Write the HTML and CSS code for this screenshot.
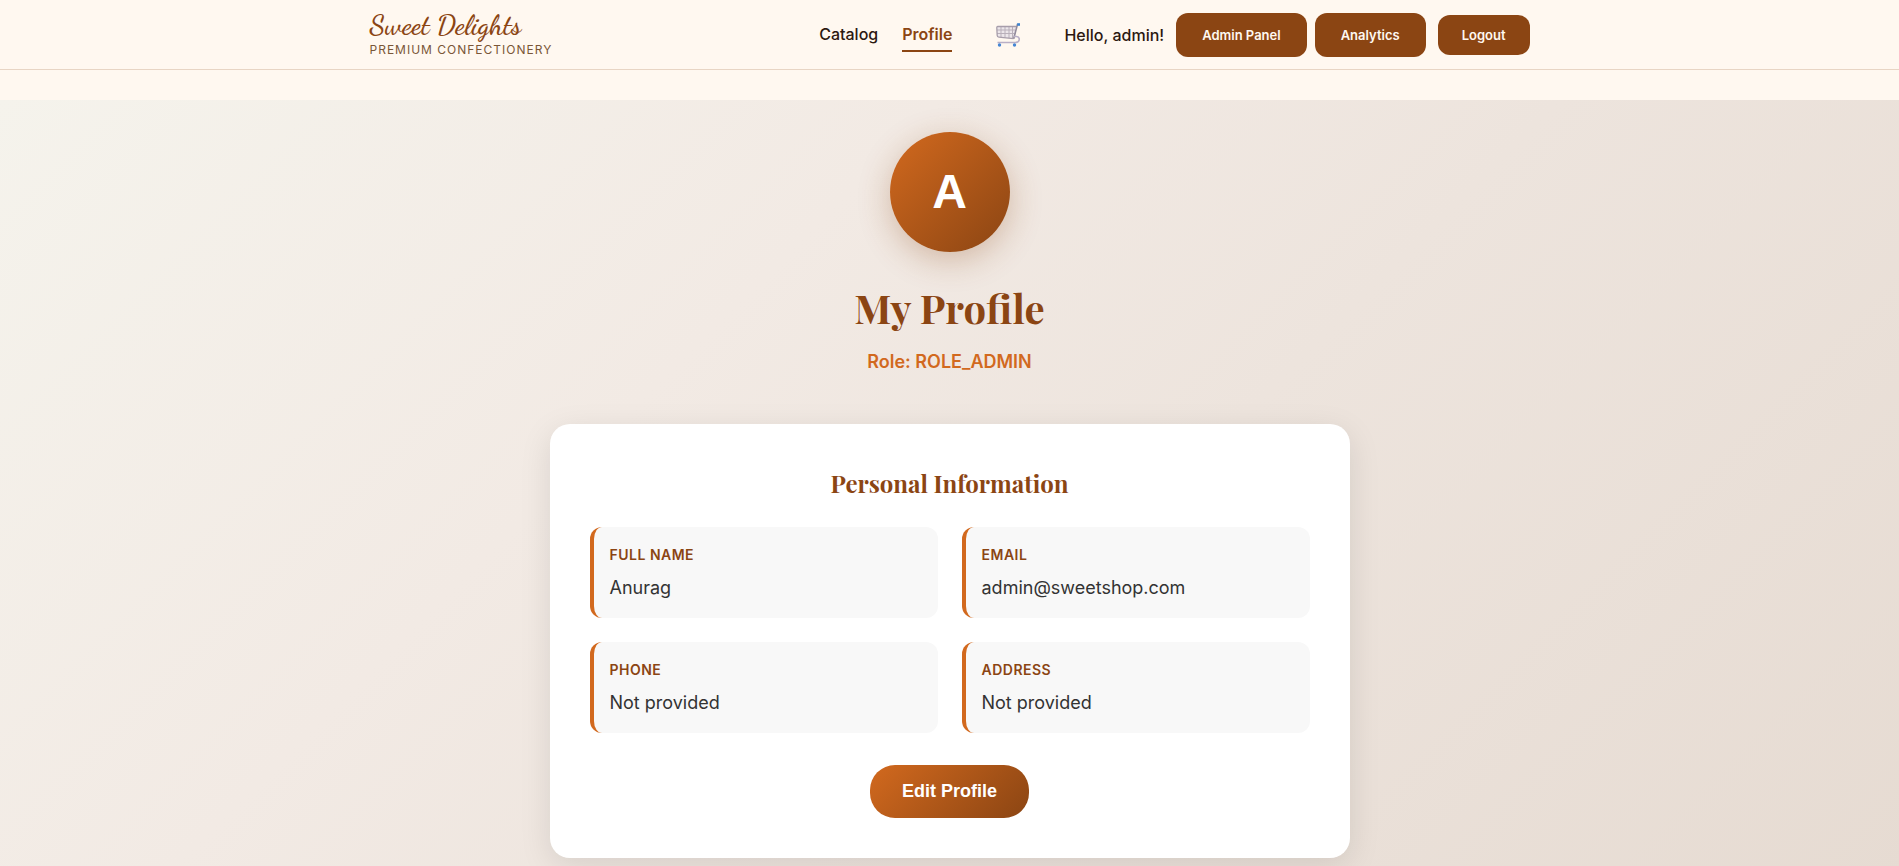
FILE: index.html
```html
<!DOCTYPE html>
<html lang="en">
<head>
<meta charset="utf-8">
<meta name="viewport" content="width=device-width, initial-scale=1">
<title>Sweet Delights - My Profile</title>
<link rel="stylesheet" href="styles.css">
</head>
<body>
<header class="site-header">
  <div class="header-inner">
    <a class="brand" href="#">
      <span class="brand-name">Sweet Delights</span>
      <span class="brand-tagline">PREMIUM CONFECTIONERY</span>
    </a>
    <nav class="nav">
      <a class="nav-link" href="#">Catalog</a>
      <a class="nav-link nav-link-active" href="#" aria-current="page">Profile</a>
      <button class="cart" type="button" aria-label="Cart">
        <svg class="cart-icon" viewBox="0 0 24 24" fill="none" aria-hidden="true">
          <path d="M1 3.5H20L17.5 15.5L2.5 14Q1 14 1 12Z" fill="#ece6ea"/>
          <path d="M1 7H19M1 10.5H18.5M5 3.5V14M9 3.5V14.5M13 3.5V15M16.5 3.5V15" stroke="#b9b0ba" stroke-width="1"/>
          <path d="M20 3.5H1.8Q.7 3.5.8 5L1.2 12.5Q1.3 14 2.8 14.1L17.5 15.6" stroke="#a79daa" stroke-width="1.3"/>
          <path d="M22 1.5H21.4L17.7 15.8" stroke="#91899a" stroke-width="1.6"/>
          <path d="M18 13.5H20.5Q23.4 13.8 23.3 16.3Q23 19.3 19.5 19.5H1.5" stroke="#b9afc6" stroke-width="1.6"/>
          <path d="M21.2 1.5H24" stroke="#3b82d0" stroke-width="2.6"/>
          <circle cx="3.5" cy="22" r="1.7" fill="#4686d4"/>
          <circle cx="18.5" cy="22" r="1.7" fill="#4686d4"/>
        </svg>
      </button>
      <div class="account">
        <span class="greeting">Hello, admin!</span>
        <div class="admin-links">
          <a class="btn btn-large" href="#">Admin Panel</a>
          <a class="btn btn-large" href="#">Analytics</a>
        </div>
        <button class="btn" type="button">Logout</button>
      </div>
    </nav>
  </div>
</header>
<main class="profile">
  <div class="profile-head">
    <div class="avatar">A</div>
    <h1 class="profile-title">My Profile</h1>
    <p class="role">Role: ROLE_ADMIN</p>
  </div>
  <section class="card">
    <h2 class="card-title">Personal Information</h2>
    <dl class="info-grid">
      <div class="info-item"><dt class="info-label">FULL NAME</dt><dd class="info-value">Anurag</dd></div>
      <div class="info-item"><dt class="info-label">EMAIL</dt><dd class="info-value">admin@sweetshop.com</dd></div>
      <div class="info-item"><dt class="info-label">PHONE</dt><dd class="info-value">Not provided</dd></div>
      <div class="info-item"><dt class="info-label">ADDRESS</dt><dd class="info-value">Not provided</dd></div>
    </dl>
    <button class="edit-btn" type="button">Edit Profile</button>
  </section>
</main>
</body>
</html>
```
FILE: styles.css
```css
* {
  box-sizing: border-box;
  margin: 0;
  padding: 0;
}

body {
  background: #fff8f0;
  color: #2c1810;
  font-family: Inter, "Liberation Sans", sans-serif;
  font-size: 16px;
  line-height: 24px;
}

a {
  color: inherit;
  text-decoration: none;
}

.site-header {
  border-bottom: 1px solid #e8d5c4;
  margin-bottom: 30px;
}

.header-inner {
  display: flex;
  align-items: center;
  justify-content: space-between;
  max-width: 1200px;
  min-height: 69px;
  margin: 0 auto;
  padding: 0 20px;
}

.brand {
  display: flex;
  flex-direction: column;
}

.brand-name {
  color: #8b4513;
  font-family: "Dancing Script", "Liberation Serif", serif;
  font-size: 28px;
  font-weight: 600;
  line-height: 30px;
}

.brand-tagline {
  color: #7a5637;
  font-size: 12px;
  letter-spacing: 1px;
  line-height: 20px;
}

.nav {
  display: flex;
  align-items: center;
  gap: 24px;
}

.nav-link {
  padding: 4px 0;
  border-bottom: 2px solid transparent;
  font-weight: 500;
}

.nav-link-active {
  border-color: #8b4513;
  color: #8b4513;
  font-weight: 600;
}

.cart {
  display: flex;
  padding: 8px 20px;
  border: 0;
  background: none;
  cursor: pointer;
}

.cart-icon {
  width: 24px;
  height: 24px;
}

.account {
  display: flex;
  align-items: center;
  gap: 12px;
}

.greeting {
  font-weight: 500;
}

.admin-links {
  display: flex;
  gap: 8px;
}

.btn {
  padding: 10px 24px;
  border: 0;
  border-radius: 12px;
  background: #8b4513;
  color: #fff8f0;
  cursor: pointer;
  font-family: inherit;
  font-size: 13px;
  font-weight: 600;
  line-height: 20px;
}

.btn-large {
  padding: 12px 26px;
}

.profile {
  min-height: calc(100vh - 100px);
  padding: 32px 20px;
  background: linear-gradient(135deg, #f5f3ec 0%, #f2eae4 35%, #ede4dd 58%, #e6dbd2 100%);
}

.profile-head {
  display: flex;
  flex-direction: column;
  align-items: center;
  margin-bottom: 48px;
}

.avatar {
  display: flex;
  align-items: center;
  justify-content: center;
  width: 120px;
  height: 120px;
  margin-bottom: 24px;
  border-radius: 50%;
  background: linear-gradient(135deg, #d2691e, #8b4513);
  box-shadow: 0 8px 32px rgba(139, 69, 19, 0.3);
  color: #fff;
  font-family: "Liberation Sans", Arial, sans-serif;
  font-size: 48px;
  font-weight: 700;
  line-height: 56px;
}

.profile-title {
  margin-bottom: 8px;
  color: #8b4513;
  font-family: "Playfair Display", "Liberation Serif", serif;
  font-size: 40px;
  font-weight: 700;
  line-height: 64px;
}

.role {
  color: #d2691e;
  font-size: 18px;
  font-weight: 600;
  line-height: 28px;
}

.card {
  max-width: 800px;
  margin: 0 auto;
  padding: 40px;
  border-radius: 20px;
  background: #fff;
  box-shadow: 0 8px 32px rgba(0, 0, 0, 0.1);
}

.card-title {
  margin-bottom: 24px;
  color: #8b4513;
  font-family: "Playfair Display", "Liberation Serif", serif;
  font-size: 24px;
  font-weight: 700;
  line-height: 39px;
  text-align: center;
}

.info-grid {
  display: grid;
  grid-template-columns: repeat(2, 1fr);
  gap: 24px;
  margin-bottom: 32px;
}

.info-item {
  padding: 16px;
  border-left: 4px solid #d2691e;
  border-radius: 12px;
  background: #f8f8f8;
}

.info-label {
  margin-bottom: 8px;
  color: #8b4513;
  font-size: 14px;
  font-weight: 600;
  letter-spacing: 0.5px;
  line-height: 23px;
}

.info-value {
  color: #333;
  font-size: 18px;
  line-height: 28px;
}

.edit-btn {
  display: block;
  margin: 0 auto;
  padding: 16px 32px;
  border: 0;
  border-radius: 25px;
  background: linear-gradient(135deg, #d2691e, #8b4513);
  color: #fff;
  cursor: pointer;
  font-family: "Liberation Sans", Arial, sans-serif;
  font-size: 18px;
  font-weight: 700;
  line-height: 21px;
}
```
